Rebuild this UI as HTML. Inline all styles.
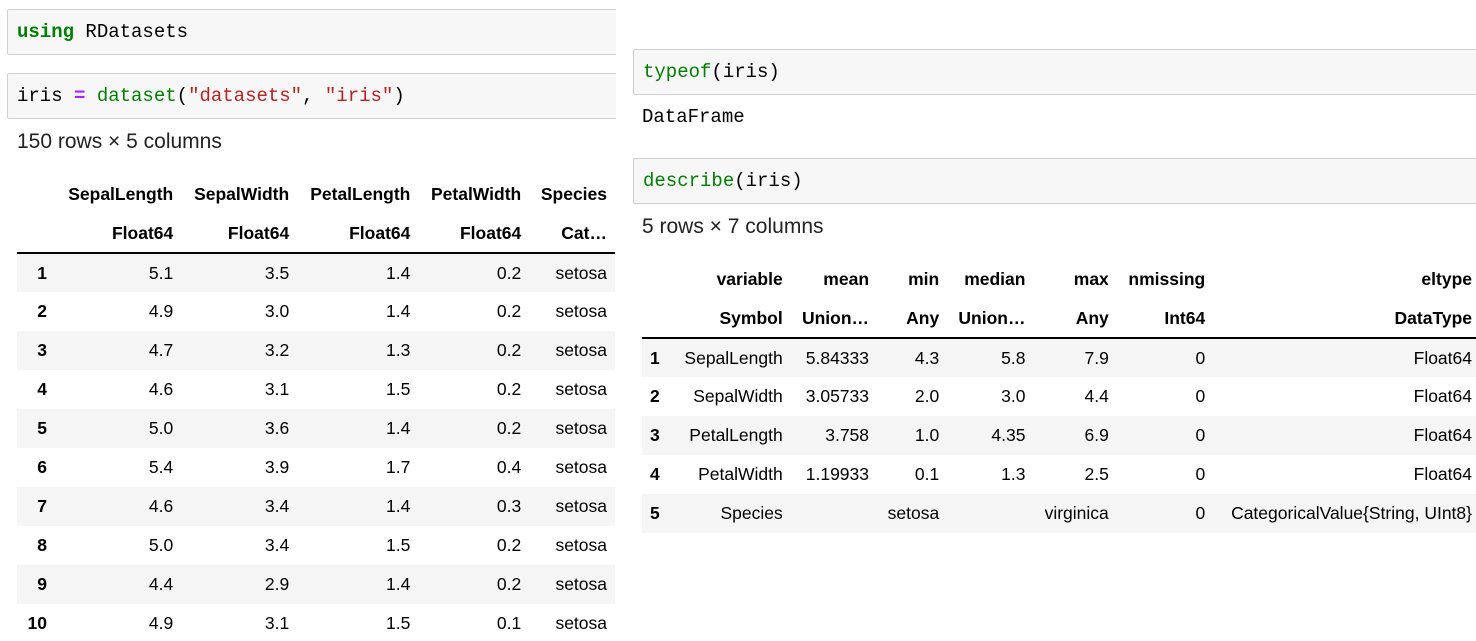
<!DOCTYPE html>
<html><head><meta charset="utf-8"><style>
*{margin:0;padding:0;box-sizing:border-box}
body{width:1476px;height:641px;background:#fff;position:relative;overflow:hidden;font-family:"Liberation Sans",Arial,sans-serif;color:#000}
.pane{position:absolute;top:0;height:641px;overflow:hidden}
.cell{position:absolute;background:#f7f7f7;border:1px solid #cfcfcf;border-radius:2px;font-family:"Liberation Mono",monospace;font-size:19px;padding:0 9px;display:flex;align-items:center}
.kw{color:#008000;font-weight:bold}.fn{color:#008000}.st{color:#ba2121}.op{color:#aa22ff;font-weight:bold}
.txt{position:absolute;font-size:21px;color:#222}
.mono{font-family:"Liberation Mono",monospace;font-size:19px}
table{position:absolute;border-collapse:collapse;font-size:17.5px}
td,th{height:39px;padding:0 8px;text-align:right;white-space:nowrap}
th{font-weight:bold}
tr.h2 th{border-bottom:2px solid #000}
tbody tr:nth-child(odd){background:#f5f5f5}
td.i{font-weight:bold}
td.l{text-align:left}
#t2 td.i{text-align:left}
#t2 td:last-child,#t2 th:last-child{padding-right:4px}
</style></head><body>
<div class="pane" style="left:0;width:616px">
  <div class="cell" style="left:7px;top:9px;width:640px;height:46px"><span class="kw">using</span>&nbsp;RDatasets</div>
  <div class="cell" style="left:7px;top:73px;width:640px;height:46px">iris&nbsp;<span class="op">=</span>&nbsp;<span class="fn">dataset</span>(<span class="st">"datasets"</span>,&nbsp;<span class="st">"iris"</span>)</div>
  <div class="txt" style="left:17px;top:130px">150 rows × 5 columns</div>
  <table style="left:17px;top:175px;width:598px">
    <thead>
      <tr><th style="width:38px"></th><th>SepalLength</th><th>SepalWidth</th><th>PetalLength</th><th>PetalWidth</th><th>Species</th></tr>
      <tr class="h2"><th></th><th>Float64</th><th>Float64</th><th>Float64</th><th>Float64</th><th>Cat…</th></tr>
    </thead>
    <tbody>
      <tr><td class="i">1</td><td>5.1</td><td>3.5</td><td>1.4</td><td>0.2</td><td>setosa</td></tr>
      <tr><td class="i">2</td><td>4.9</td><td>3.0</td><td>1.4</td><td>0.2</td><td>setosa</td></tr>
      <tr><td class="i">3</td><td>4.7</td><td>3.2</td><td>1.3</td><td>0.2</td><td>setosa</td></tr>
      <tr><td class="i">4</td><td>4.6</td><td>3.1</td><td>1.5</td><td>0.2</td><td>setosa</td></tr>
      <tr><td class="i">5</td><td>5.0</td><td>3.6</td><td>1.4</td><td>0.2</td><td>setosa</td></tr>
      <tr><td class="i">6</td><td>5.4</td><td>3.9</td><td>1.7</td><td>0.4</td><td>setosa</td></tr>
      <tr><td class="i">7</td><td>4.6</td><td>3.4</td><td>1.4</td><td>0.3</td><td>setosa</td></tr>
      <tr><td class="i">8</td><td>5.0</td><td>3.4</td><td>1.5</td><td>0.2</td><td>setosa</td></tr>
      <tr><td class="i">9</td><td>4.4</td><td>2.9</td><td>1.4</td><td>0.2</td><td>setosa</td></tr>
      <tr><td class="i">10</td><td>4.9</td><td>3.1</td><td>1.5</td><td>0.1</td><td>setosa</td></tr>
    </tbody>
  </table>
</div>
<div class="pane" style="left:618px;width:858px">
  <div class="cell" style="left:15px;top:49px;width:860px;height:46px"><span class="fn">typeof</span>(iris)</div>
  <div class="txt mono" style="left:24px;top:106px;color:#000">DataFrame</div>
  <div class="cell" style="left:15px;top:158px;width:860px;height:46px"><span class="fn">describe</span>(iris)</div>
  <div class="txt" style="left:24px;top:215px">5 rows × 7 columns</div>
  <table id="t2" style="left:24px;top:260px;width:834px">
    <thead>
      <tr><th style="width:30px"></th><th>variable</th><th>mean</th><th>min</th><th>median</th><th>max</th><th>nmissing</th><th>eltype</th></tr>
      <tr class="h2"><th></th><th>Symbol</th><th>Union…</th><th>Any</th><th>Union…</th><th>Any</th><th>Int64</th><th>DataType</th></tr>
    </thead>
    <tbody>
      <tr><td class="i">1</td><td>SepalLength</td><td>5.84333</td><td>4.3</td><td>5.8</td><td>7.9</td><td>0</td><td>Float64</td></tr>
      <tr><td class="i">2</td><td>SepalWidth</td><td>3.05733</td><td>2.0</td><td>3.0</td><td>4.4</td><td>0</td><td>Float64</td></tr>
      <tr><td class="i">3</td><td>PetalLength</td><td>3.758</td><td>1.0</td><td>4.35</td><td>6.9</td><td>0</td><td>Float64</td></tr>
      <tr><td class="i">4</td><td>PetalWidth</td><td>1.19933</td><td>0.1</td><td>1.3</td><td>2.5</td><td>0</td><td>Float64</td></tr>
      <tr><td class="i">5</td><td>Species</td><td></td><td>setosa</td><td></td><td>virginica</td><td>0</td><td>CategoricalValue{String, UInt8}</td></tr>
    </tbody>
  </table>
</div>
</body></html>
